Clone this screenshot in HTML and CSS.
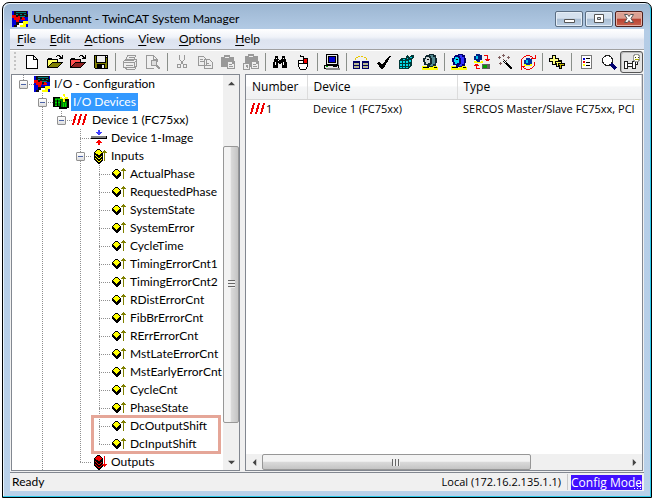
FILE: index.html
```html
<!DOCTYPE html>
<html lang="en">
<head>
<meta charset="utf-8">
<title>Unbenannt - TwinCAT System Manager</title>
<link rel="stylesheet" href="styles.css">
</head>
<body>
<svg class="sprite" aria-hidden="true">
  <symbol id="logo" viewBox="0 0 16 16">
    <path fill="#0000d8" d="M0 0h16v16H0z"/>
    <path fill="#101010" d="M2 0h13v3h1v3h-4v2H4V6H2z"/>
    <path fill="#008080" d="M4 1h10v1H4zM4 3h2v1H4zM8 3h2v1H8zM12 3h2v1h-2zM6 5h7v1H6z"/>
    <path fill="#f00000" d="M0 4h4v2h2v-1h2v4H2V7H0zM10 6h2v1h1v2H9V8h1zM4 9h3v2H4z"/>
    <path fill="#101010" d="M4 11h8v5H2v-2h2z"/>
    <path fill="#fff" d="M7 12h4v2H9v2H5v-2h2z"/>
    <path fill="#ffff00" d="M11 10h5v3h-2v3H8v-2h3z"/>
  </symbol>
  <symbol id="devices" viewBox="0 0 16 16">
    <path fill="#000" d="M0 3h14v2h2v9h-2v1H6v-2H0z"/>
    <path fill="#008000" d="M2 4h8v8H2zM8 7h6v6H8z"/>
    <path fill="#00e000" d="M2 5h2v1H2zM5 5h2v1H5zM2 8h2v1H2zM5 8h2v1H5zM2 11h2v1H2zM10 9h1v4h-1zM12 9h1v4h-1z"/>
    <path fill="#000" d="M4 6h1v6H4zM7 7h1v5H7z"/>
    <path fill="#ffff00" d="M10 0h2v3h3v2h-3v3h-2V5H7V3h3z"/>
    <path fill="#fff" d="M10 2h1v1h1v1h-1v1h-1V4H9V3h1z"/>
  </symbol>
  <symbol id="slashes" viewBox="0 0 16 16">
    <path fill="none" stroke="#f00000" stroke-width="2" d="M4 2 1 13M9 2 6 13M14 2l-3 11"/>
  </symbol>
  <symbol id="image" viewBox="0 0 16 16">
    <path fill="#000" d="M0 6h16v3H0z"/><path fill="#808080" d="M0 6h15v2H0z"/>
    <path fill="#4040ff" d="M7 0h2v2h2v1h-1v1H9v1H7V4H6V3H5V2h2z"/>
    <path fill="#f00" d="M7 10h2v1h1v1h1v1H9v2H7v-2H5v-1h1v-1h1z"/>
  </symbol>
  <symbol id="stack" viewBox="0 0 16 16">
    <path fill="#000" d="M6 1h3v1h1v1h1v1h1v9h-1v1h-1v1H9v1H7v-1H6v-1H5v-1H4v-1H3V4h1V3h1V2h1z"/>
    <path d="M6 2h3v1h1v1h1v1h-1v1H9v1H7V6H5V5H4V4h1V3h1zM4 7h1v1h1v1h1v1h2V9h1V8h1v1h-1v1H9v1H7v-1H6V9H5V8H4zM4 10h1v1h1v1h1v1h2v-1h1v-1h1v1h-1v1H9v1H7v-1H6v-1H5v-1H4z"/>
  </symbol>
  <symbol id="inputs" viewBox="0 0 16 16">
    <use href="#stack" fill="#ff0"/>
    <path fill="#808000" d="M13 2h1v11h-1zM12 3h3v1h-3zM11 4h5v1h-5z"/>
  </symbol>
  <symbol id="outputs" viewBox="0 0 16 16">
    <use href="#stack" fill="#f00000"/>
    <path fill="#f00000" d="M13 2h1v11h-1zM12 11h3v1h-3zM11 10h5v1h-5z"/>
  </symbol>
  <symbol id="var" viewBox="0 0 16 16">
    <path fill="#000" d="M5 3h3v1h1v1h1v1h1v4h-1v1H9v1H8v1H6v-1H5v-1H4v-1H3V9H2V6h1V5h1V4h1z"/>
    <path fill="#ff0" d="M5 4h3v1h1v1h1v1H9v1H8v1H7v1H6V9H5V8H4V7H3V6h1V5h1z"/>
    <path fill="#808000" d="M13 2h1v11h-1zM12 3h3v1h-3zM11 4h5v1h-5z"/>
  </symbol>

  <symbol id="new" viewBox="0 0 16 16"><path fill="#fff" stroke="#000" d="M2.500 1.500h7l4 4v9h-11zM9.500 1.500v4h4"/></symbol>
  <symbol id="open" viewBox="0 0 16 16">
    <path fill="#000" d="M0 5h1V4h4v1h6v3h5v1h-1v1h-1v1h-1v1h-1v1h-1v1H0zM9 2h1V1h3v1h1v1h1V1h1v4h-4V4h1V3h-1V2h-2v1H9z"/>
    <path fill="#ff6" d="M1 6h9v2H5v1H4v1H3v1H2v1H1z"/><path fill="#808000" d="M5 9h9l-3 4H2z"/>
  </symbol>
  <symbol id="open-red" viewBox="0 0 16 16">
    <path fill="#000" d="M0 5h1V4h4v1h6v3h5v1h-1v1h-1v1h-1v1h-1v1h-1v1H0zM9 2h1V1h3v1h1v1h1V1h1v4h-4V4h1V3h-1V2h-2v1H9z"/>
    <path fill="#ff5050" d="M1 6h9v2H5v1H4v1H3v1H2v1H1z"/><path fill="#902020" d="M5 9h9l-3 4H2z"/>
  </symbol>
  <symbol id="save" viewBox="0 0 16 16">
    <path fill="#000" d="M1 1h14v14H2l-1-1z"/><path fill="#808000" d="M2 2h1v7h10V4h1v10h-2v-4H4v4H2z"/>
    <path fill="#eee" d="M4 2h8v6H4zM13 2h1v1h-1zM9 11h2v3H9z"/>
  </symbol>
  <symbol id="print" viewBox="0 0 16 16">
    <path fill="#eee" stroke="#999" d="M5.500 1.500h8l-2 5h-8zM1.500 7.500l2-2h11v6l-2 2h-11zM1.500 8.500h11v5M12.500 8.500l2-2M3.500 11.500h7M6.500 3.500h5M5.500 5.500h5M3.500 13.500l1 2h8l2-3"/>
  </symbol>
  <symbol id="preview" viewBox="0 0 16 16">
    <path fill="none" stroke="#999" d="M8.500 14.500h-7v-13h7l4 4v2M8.500 1.500v4h4"/><circle cx="9" cy="9" r="3" fill="#ddd" stroke="#999"/><path stroke="#999" stroke-width="2" d="m11 11 4 4"/>
  </symbol>
  <symbol id="cut" viewBox="0 0 16 16">
    <path fill="none" stroke="#999" d="M5.500 1v4l4 6M10.500 1v4l-4 6"/><circle cx="5" cy="12" r="2" fill="none" stroke="#999"/><circle cx="11" cy="12" r="2" fill="none" stroke="#999"/>
  </symbol>
  <symbol id="copy" viewBox="0 0 16 16">
    <path fill="#eee" stroke="#999" d="M1.500 2.500h5l3 3v6h-8zM3 5.500h3M3 7.500h4M7.500 5.500h5l3 3v6h-8zM9 9.500h3M9 11.500h5"/>
  </symbol>
  <symbol id="paste" viewBox="0 0 16 16">
    <path fill="#999" d="M1 3h3V1h6v2h4v4h1v8H7v-2H1z"/><path fill="#eee" d="M5 3h4v1H5zM8 8h4v2h2v4H8z"/><path fill="#999" d="M9 10h3v1H9zM9 12h4v1H9z"/>
  </symbol>
  <symbol id="link" viewBox="0 0 16 16">
    <path fill="#999" d="M2 2h3V0h6v2h4v5h1v8H8v-2H2z"/><path fill="#eee" d="M6 2h4v1H6zM9 8h4v2h2v4H9z"/><path fill="#999" d="M10 10h3v1h-3zM10 12h4v1h-4z"/>
    <path fill="#eee" stroke="#999" d="M.500 9.500h6v6h-6zM2.500 13.500l2-2M2.500 11.500h2v2"/>
  </symbol>
  <symbol id="find" viewBox="0 0 16 16">
    <path fill="#000" d="M3 2h3v3h1v1h2V5h1V2h3v3h1v3h1v6h-5V9H9v1H7V9H6v5H1V8h1V5h1z"/><path fill="#fff" d="M4 4h1v1H4zM11 4h1v1h-1zM3 8h1v3H3zM6 6h1v1H6zM11 8h1v3h-1z"/>
  </symbol>
  <symbol id="mouse" viewBox="0 0 16 16">
    <path fill="#fff" stroke="#000" d="M3.500 6.500h9v6l-2 3h-5l-2-3zM3.500 9.500h9M8.500 6.500v3"/><path fill="#f00000" stroke="#000" d="M8.500 4.500h4v5h-4z"/><path fill="none" stroke="#000" d="M8.500 4V2.500h-3V1"/>
  </symbol>
  <symbol id="pc" viewBox="0 0 16 16">
    <path fill="#e8e8e8" stroke="#000" d="M2.500.500h11v10h-11zM.500 11.500h14v3H.500z"/><path fill="#888" d="M14 1h1v10h-1zM2 14h14v2H2z"/><path fill="#0000d0" stroke="#000" d="M4.500 2.500h7v6h-7z"/><path fill="#0a0" d="M2 12h2v1H2z"/><path fill="#000" d="M9 12h4v1H9z"/>
  </symbol>
  <symbol id="map" viewBox="0 0 16 16">
    <path fill="#000060" d="M0 7h7v8H0zM9 7h7v8H9z"/><path fill="#b8b890" d="M1 9h5v2H1zM10 9h5v2h-5zM1 12h5v2H1zM10 12h5v2h-5z"/><path fill="#e8c800" d="M2 4h1v2H2zM3 3h2v1H3zM5 2h2v1H5zM8 2h2v1H8zM11 3h2v1h-2zM13 4h1v2h-1z"/>
  </symbol>
  <symbol id="check" viewBox="0 0 16 16"><path fill="#000" d="m1 9 2-1 3 3 7-9h2L7 15H5z"/></symbol>
  <symbol id="cubes" viewBox="0 0 16 16">
    <path fill="#003838" d="m0 6 3-2h4V2l2-1 1 2 3-2h2v2l-2 2v6l-4 4H0z"/><path fill="#00d8e8" d="M1 7h2v2H1zM4 7h2v2H4zM7 7h2v2H7zM1 10h2v2H1zM4 10h2v2H4zM7 10h2v2H7zM1 13h2v1H1zM4 13h2v1H4zM7 13h2v1H7zM4 5h2v1H4zM8 4h1v1H8zM11 3h2v1h-2zM10 6h2v2h-2zM10 10h1v2h-1z"/>
  </symbol>
  <symbol id="gear-dim" viewBox="0 0 16 16">
    <path fill="#ff0" d="M0 12h5l2 2 6-3 3 3v2H0z"/><path fill="#102830" d="M4 1h2l1-1h4l1 1h2v3h1v5h-1v3h-3v1H5v-2H2V8H1V4h2z"/><path fill="#508890" d="M8 1h3v2h2v7h-2v2H8l2-3V5z"/><path fill="#d0d8d8" d="M4 3h3v1h1v5H6v1H4V8H3V5h1z"/><path fill="#000" d="M5 5h2v1H5zM1 13h6v1H1zM12 13h3v1h-3z"/>
  </symbol>
  <symbol id="gear" viewBox="0 0 16 16">
    <path fill="#ff0" d="M0 12h5l2 2 6-3 3 3v2H0z"/><path fill="#000070" d="M4 1h2l1-1h4l1 1h2v3h1v5h-1v3h-3v1H5v-2H2V8H1V4h2z"/><path fill="#3030ff" d="M8 1h3v2h2v7h-2v2H8l2-3V5z"/><path fill="#00d8f8" d="M4 3h3v1h1v5H6v1H4V8H3V5h1z"/><path fill="#000" d="M5 5h2v1H5zM1 13h6v1H1zM12 13h3v1h-3z"/>
  </symbol>
  <symbol id="reload" viewBox="0 0 16 16">
    <path fill="#002080" d="M2 0h4v1h2v5H6v2H2V6H0V2h2z"/><path fill="#00c8f0" d="M2 2h2v3H2z"/><path fill="#ff0" d="M0 7h3v1h4V7h2v2H0z"/><path fill="#606060" d="M8 10h8v5H8z"/><path fill="#00a000" d="M9 11h4v3H9z"/>
    <path fill="none" stroke="#f00000" d="M10 1.500h3.500V6M11 5.500h5M12 6.500h3M6 14.500H2.500V11M0 11.500h5M1 10.500h3"/>
  </symbol>
  <symbol id="wand" viewBox="0 0 16 16">
    <path stroke="#000" stroke-width="2" d="m7 7 8 8"/><path stroke="#fff" d="m7 7 2 2"/><path fill="#806060" d="M1 3h3v1H1zM2 2h1v3H2zM6 0h1v3H6zM5 1h3v1H5zM10 3h3v1h-3zM11 2h1v3h-1zM2 9h3v1H2zM3 8h1v3H3zM6 5h1v1H6zM9 6h1v1H9z"/>
  </symbol>
  <symbol id="cycle" viewBox="0 0 16 16">
    <path fill="none" stroke="#f00000" d="M14 5A7 7 0 0 0 2 5L1 8l1 4M2 12a7 7 0 0 0 12 0l1-4M11 4.500h4.500V1M5 12.500H1.500V16"/><path fill="#0030a0" d="M6 4h4v1h2v5h-2v2H6v-2H4V6h2z"/><path fill="#00c8f0" d="M6 6h2v3H6z"/><path fill="#ff0" d="M4 10h2v1h4v-1h2v2H4z"/>
  </symbol>
  <symbol id="plus" viewBox="0 0 16 16">
    <path fill="#c8b800" stroke="#000" d="M10.500 6.500h2v3h3v2h-3v3h-2v-3h-3v-2h3z"/><path fill="#ff6" stroke="#000" d="M7.500 4.500h2v3h3v2h-3v3h-2v-3h-3v-2h3z"/><path fill="#ffff80" stroke="#000" d="M3.500 1.500h3v3h3v3h-3v3h-3v-3h-3v-3h3z"/>
  </symbol>
  <symbol id="list" viewBox="0 0 16 16">
    <path fill="#fff" stroke="#777" d="M3.500 1.500h10v13h-10z"/><path fill="#0000d0" d="M5 4h2v2H5z"/><path fill="#f00000" d="M5 7h2v2H5z"/><path fill="#ff0" d="M5 10h2v2H5z"/><path fill="#000" d="M8 4h4v1H8zM8 8h4v1H8zM8 11h4v1H8z"/>
  </symbol>
  <symbol id="zoom" viewBox="0 0 16 16"><circle cx="6.500" cy="6.500" r="5" fill="#fff" stroke="#222"/><path stroke="#000070" stroke-width="3" d="m10 10 5 5"/></symbol>
  <symbol id="watch" viewBox="0 0 18 16">
    <path fill="#fff" stroke="#222" d="M1.500 7.500h3v7h-3zM4.500 9.500h5v3h-5zM9.500 7.500h3v7h-3zM12.500 10.500h2v-3"/><circle cx="13.500" cy="4" r="3.500" fill="#fffff0" stroke="#999"/><path fill="#333" d="M12 3h1v1h-1zM15 3h1v1h-1z"/><path stroke="#aa0" d="M12 5.500h4"/>
  </symbol>
</svg>

<main class="window">
  <header class="titlebar">
    <svg class="icon"><use href="#logo"/></svg>
    <h1>Unbenannt - TwinCAT System Manager</h1>
    <div class="controls">
      <button class="control" aria-label="Minimize"><svg viewBox="0 0 26 14"><path fill="#fff" stroke="#555" d="M8.500 7.500h10v3h-10z"/></svg></button>
      <button class="control" aria-label="Maximize"><svg viewBox="0 0 26 14"><path fill="#fff" stroke="#555" fill-rule="evenodd" d="M8.500 2.500h9v8h-9zM11.500 5.500v2h3v-2z"/></svg></button>
      <button class="control close" aria-label="Close"><svg viewBox="0 0 26 14"><path fill="#fff" stroke="#555" d="M8.500 2.500h3l1.500 2 1.500-2h3L15 6.500l2.500 4h-3l-1.500-2-1.500 2h-3l2.500-4z"/></svg></button>
    </div>
  </header>
  <div class="client">
    <nav class="menu">
      <button><u>F</u>ile</button><button><u>E</u>dit</button><button><u>A</u>ctions</button><button><u>V</u>iew</button><button><u>O</u>ptions</button><button><u>H</u>elp</button>
    </nav>
    <div class="toolbar" role="toolbar">
      <span class="grip"></span>
      <button aria-label="New"><svg class="icon"><use href="#new"/></svg></button>
      <button aria-label="Open"><svg class="icon"><use href="#open"/></svg></button>
      <button aria-label="Open from target"><svg class="icon"><use href="#open-red"/></svg></button>
      <button aria-label="Save"><svg class="icon"><use href="#save"/></svg></button>
      <span class="sep"></span>
      <button aria-label="Print"><svg class="icon"><use href="#print"/></svg></button>
      <button aria-label="Print preview"><svg class="icon"><use href="#preview"/></svg></button>
      <span class="sep"></span>
      <button aria-label="Cut"><svg class="icon"><use href="#cut"/></svg></button>
      <button aria-label="Copy"><svg class="icon"><use href="#copy"/></svg></button>
      <button aria-label="Paste"><svg class="icon"><use href="#paste"/></svg></button>
      <button aria-label="Paste with links"><svg class="icon"><use href="#link"/></svg></button>
      <span class="sep"></span>
      <button aria-label="Find"><svg class="icon"><use href="#find"/></svg></button>
      <button aria-label="Mouse"><svg class="icon"><use href="#mouse"/></svg></button>
      <span class="sep"></span>
      <button aria-label="Choose target"><svg class="icon"><use href="#pc"/></svg></button>
      <span class="sep"></span>
      <button aria-label="Generate mappings"><svg class="icon"><use href="#map"/></svg></button>
      <button aria-label="Check configuration"><svg class="icon"><use href="#check"/></svg></button>
      <button aria-label="Activate configuration"><svg class="icon"><use href="#cubes"/></svg></button>
      <button aria-label="Run mode"><svg class="icon"><use href="#gear-dim"/></svg></button>
      <span class="sep"></span>
      <button aria-label="Config mode"><svg class="icon"><use href="#gear"/></svg></button>
      <button aria-label="Reload devices"><svg class="icon"><use href="#reload"/></svg></button>
      <button aria-label="Scan devices"><svg class="icon"><use href="#wand"/></svg></button>
      <button aria-label="Toggle free run"><svg class="icon"><use href="#cycle"/></svg></button>
      <span class="sep"></span>
      <button aria-label="Append"><svg class="icon"><use href="#plus"/></svg></button>
      <span class="sep"></span>
      <button aria-label="Properties"><svg class="icon"><use href="#list"/></svg></button>
      <button aria-label="Zoom"><svg class="icon"><use href="#zoom"/></svg></button>
      <button class="pressed" aria-label="Show online data"><svg class="icon wide"><use href="#watch"/></svg></button>
    </div>
    <div class="panes">
      <section class="pane tree-pane">
        <ul class="tree">
          <li><div class="row"><button class="toggle" aria-label="Collapse"></button><svg class="icon"><use href="#logo"/></svg><span>I/O - Configuration</span></div>
            <ul>
              <li class="more"><div class="row"><button class="toggle" aria-label="Collapse"></button><svg class="icon"><use href="#devices"/></svg><span class="selected">I/O Devices</span></div>
                <ul>
                  <li><div class="row"><button class="toggle" aria-label="Collapse"></button><svg class="icon"><use href="#slashes"/></svg><span>Device 1 (FC75xx)</span></div>
                    <ul>
                      <li><div class="row"><svg class="icon"><use href="#image"/></svg><span>Device 1-Image</span></div></li>
                      <li><div class="row"><button class="toggle" aria-label="Collapse"></button><svg class="icon"><use href="#inputs"/></svg><span>Inputs</span></div>
                        <ul>
                          <li><div class="row"><svg class="icon"><use href="#var"/></svg><span>ActualPhase</span></div></li>
                          <li><div class="row"><svg class="icon"><use href="#var"/></svg><span>RequestedPhase</span></div></li>
                          <li><div class="row"><svg class="icon"><use href="#var"/></svg><span>SystemState</span></div></li>
                          <li><div class="row"><svg class="icon"><use href="#var"/></svg><span>SystemError</span></div></li>
                          <li><div class="row"><svg class="icon"><use href="#var"/></svg><span>CycleTime</span></div></li>
                          <li><div class="row"><svg class="icon"><use href="#var"/></svg><span>TimingErrorCnt1</span></div></li>
                          <li><div class="row"><svg class="icon"><use href="#var"/></svg><span>TimingErrorCnt2</span></div></li>
                          <li><div class="row"><svg class="icon"><use href="#var"/></svg><span>RDistErrorCnt</span></div></li>
                          <li><div class="row"><svg class="icon"><use href="#var"/></svg><span>FibBrErrorCnt</span></div></li>
                          <li><div class="row"><svg class="icon"><use href="#var"/></svg><span>RErrErrorCnt</span></div></li>
                          <li><div class="row"><svg class="icon"><use href="#var"/></svg><span>MstLateErrorCnt</span></div></li>
                          <li><div class="row"><svg class="icon"><use href="#var"/></svg><span>MstEarlyErrorCnt</span></div></li>
                          <li><div class="row"><svg class="icon"><use href="#var"/></svg><span>CycleCnt</span></div></li>
                          <li><div class="row"><svg class="icon"><use href="#var"/></svg><span>PhaseState</span></div></li>
                          <li class="marked"><div class="row"><svg class="icon"><use href="#var"/></svg><span>DcOutputShift</span></div></li>
                          <li><div class="row"><svg class="icon"><use href="#var"/></svg><span>DcInputShift</span></div></li>
                        </ul>
                      </li>
                      <li><div class="row"><svg class="icon"><use href="#outputs"/></svg><span>Outputs</span></div></li>
                    </ul>
                  </li>
                </ul>
              </li>
            </ul>
          </li>
        </ul>
        <div class="scroll vertical">
          <button aria-label="Scroll up"><svg viewBox="0 0 8 4"><path d="M4 0l4 4H0z"/></svg></button>
          <span class="before"></span><span class="thumb"><i></i></span><span class="after"></span>
          <button aria-label="Scroll down"><svg viewBox="0 0 8 4"><path d="M0 0h8L4 4z"/></svg></button>
        </div>
      </section>
      <section class="pane list-pane">
        <div class="list">
          <table>
            <thead><tr><th class="number">Number</th><th class="device">Device</th><th>Type</th></tr></thead>
            <tbody><tr><td><svg class="icon"><use href="#slashes"/></svg>1</td><td>Device 1 (FC75xx)</td><td>SERCOS Master/Slave FC75xx, PCI</td></tr></tbody>
          </table>
        </div>
        <div class="scroll horizontal">
          <button aria-label="Scroll left"><svg viewBox="0 0 4 8"><path d="M4 0v8L0 4z"/></svg></button>
          <span class="thumb"><i></i></span><span class="after"></span>
          <button aria-label="Scroll right"><svg viewBox="0 0 4 8"><path d="M0 0l4 4-4 4z"/></svg></button>
        </div>
      </section>
    </div>
    <footer class="status">
      <span class="ready">Ready</span><span class="local">Local (172.16.2.135.1.1)</span>
      <span class="mode">Config Mode<svg class="sizer" viewBox="0 0 9 9"><path fill="#fff" d="M7 1h1v1H7zM4 4h1v1H4zM7 4h1v1H7zM1 7h1v1H1zM4 7h1v1H4zM7 7h1v1H7z"/></svg></span>
    </footer>
  </div>
</main>
</body>
</html>
```
FILE: styles.css
```css
*, *::after { box-sizing: border-box; }
body {
  margin: 0;
  height: 100vh;
  padding: 2px 0 1px 2px;
  background: #fff;
  color: #000;
  font: 12px/18px Lato, "Open Sans", sans-serif;
}
button { margin: 0; padding: 0; border: 0; background: none; color: inherit; font: inherit; }
ul { list-style: none; margin: 0; padding: 0; }
.sprite { display: none; }
svg { display: block; flex: none; }
.icon { width: 16px; height: 16px; shape-rendering: crispEdges; }
.icon.wide { width: 18px; }

.window {
  display: flex;
  flex-direction: column;
  height: 100%;
  padding: 0 7px 6px;
  border: 1px solid #000;
  border-radius: 7px 7px 0 0;
  background: linear-gradient(#9bb5d1, #b4cce6 28px, #b9d1ea);
  box-shadow: inset -1px -1px #2cc9ea, inset 1px 1px #e8f4fc;
}
.titlebar { display: flex; align-items: center; height: 26px; padding: 5px 1px 0 2px; }
.titlebar h1 { flex: 1; margin: 0 0 0 5px; font-size: 12px; font-weight: 400; }
.controls { display: flex; gap: 2px; }
.control {
  width: 28px;
  height: 16px;
  border: 1px solid #5b6e83;
  border-radius: 2px;
  background: linear-gradient(#d5e1ee 45%, #a8bdd3 50%, #bdd0e4);
  box-shadow: inset 0 0 0 1px #e4edf6;
}
.control.close { background: linear-gradient(#dba092 45%, #b84030 50%, #c86450); box-shadow: inset 0 0 0 1px #e5b0a4; border-color: #4e1f1c; }

.client { flex: 1; min-height: 0; display: flex; flex-direction: column; background: #f0f0f0; }
.menu {
  display: flex;
  gap: 14px;
  height: 20px;
  padding: 0 7px;
  background: linear-gradient(#fff, #f0f3f9 40%, #dde3ef 55%, #e0e6f2);
}
.menu u { text-underline-offset: 2px; }
.toolbar {
  display: flex;
  align-items: center;
  height: 25px;
  overflow: hidden;
  border-top: 1px solid #a0a0a0;
  box-shadow: inset 0 1px #fff;
}
.grip { flex: none; width: 10px; height: 20px; border-left: 4px solid transparent; background: repeating-linear-gradient(#c4c4c4 0 2px, transparent 2px 4px) 0 0 / 2px 100% no-repeat; }
.toolbar button { display: grid; place-items: center; width: 23px; height: 22px; flex: none; }
.toolbar .pressed { border: 1px solid #555; border-radius: 3px; background: #e4e4e4; box-shadow: inset 1px 1px #bbb; }
.sep { flex: none; width: 1px; height: 18px; margin: 0 2px 0 3px; background: #8a8f8a; }

.panes { flex: 1; min-height: 0; display: grid; grid-template-columns: 229px minmax(0, 1fr); gap: 5px; margin: 0 1px; }
.pane { min-width: 0; min-height: 0; display: flex; border: 1px solid #828790; background: #fff; }
.tree-pane { overflow: hidden; }
.tree { flex: 1; min-width: 0; padding-left: 2px; white-space: nowrap; }
.tree ul { padding-left: 19px; }
.tree li { background: repeating-linear-gradient(#909090 0 1px, transparent 1px 2px) 9px 0 / 1px 100% no-repeat; }
.tree li:last-child { background-size: 1px 9px; }
.tree li.more { background-size: 1px 100vh; }
.row {
  display: flex;
  align-items: center;
  height: 18px;
  padding-left: 20px;
  background: repeating-linear-gradient(90deg, #909090 0 1px, transparent 1px 2px) 9px 9px / 11px 1px no-repeat;
}
.row .toggle {
  width: 9px;
  height: 9px;
  margin: 0 6px 0 -15px;
  border: 1px solid #919191;
  border-radius: 1px;
  background: linear-gradient(#4b63a7, #4b63a7) center / 5px 1px no-repeat, linear-gradient(#fff, #ddd);
}
.row span { margin-left: 2px; padding: 0 2px; }
.row .selected { background: #3399ff; color: #fff; }
.marked { position: relative; }
.marked::after {
  content: "";
  position: absolute;
  left: 1px;
  top: -2px;
  width: 130px;
  height: 39px;
  border: 3px solid #e5a698;
}

.scroll { display: flex; flex: none; background: #f0f0f0; }
.scroll button { display: grid; place-items: center; flex: none; width: 16px; height: 16px; }
.scroll button svg { width: 7px; height: 7px; fill: #444; }
.vertical { flex-direction: column; width: 16px; }
.thumb { display: grid; place-items: center; border: 1px solid #979797; border-radius: 2px; }
.vertical .thumb { flex: 277; background: linear-gradient(90deg, #f3f3f3 45%, #dadada 50%, #c4c4c4); }
.vertical .before { flex: 55; }
.vertical .after { flex: 31; }
.vertical .thumb i { width: 7px; height: 8px; background: repeating-linear-gradient(#666 0 1px, #eee 1px 3px); }
.list-pane { flex-direction: column; }
.list { flex: 1; overflow: hidden; }
.horizontal { height: 16px; }
.horizontal .thumb { flex: 268; background: linear-gradient(#f3f3f3 45%, #dadada 50%, #c4c4c4); }
.horizontal .after { flex: 96; }
.horizontal .thumb i { width: 8px; height: 7px; background: repeating-linear-gradient(90deg, #666 0 1px, #eee 1px 3px); }

table { width: 100%; table-layout: fixed; border-collapse: collapse; white-space: nowrap; font: 11px/18px "Open Sans", sans-serif; }
th {
  height: 24px;
  padding: 0 6px;
  border-right: 1px solid #dcdcdc;
  border-bottom: 1px solid #d5d5d5;
  background: linear-gradient(#fff 45%, #f5f6f7 50%, #f0f1f2);
  font-size: 12px;
  font-weight: 400;
  text-align: left;
}
.number { width: 61px; }
.device { width: 150px; }
td { height: 20px; padding: 0 6px; }
td:first-child { padding-left: 4px; }
td .icon { display: inline-block; vertical-align: -4px; }

.status { display: flex; align-items: center; height: 19px; margin-top: 1px; border-top: 1px solid #828790; }
.ready { flex: 1; padding-left: 2px; }
.local { padding-right: 6px; border-right: 1px solid #c8c8c8; font: 11px/16px "Open Sans", sans-serif; }
.mode { position: relative; margin: 0 2px 0 3px; line-height: 15px; font-family: "Open Sans", sans-serif; background: #4010ff; color: #fff; white-space: nowrap; }
.sizer { position: absolute; right: 0; bottom: 0; width: 9px; height: 9px; }
```
